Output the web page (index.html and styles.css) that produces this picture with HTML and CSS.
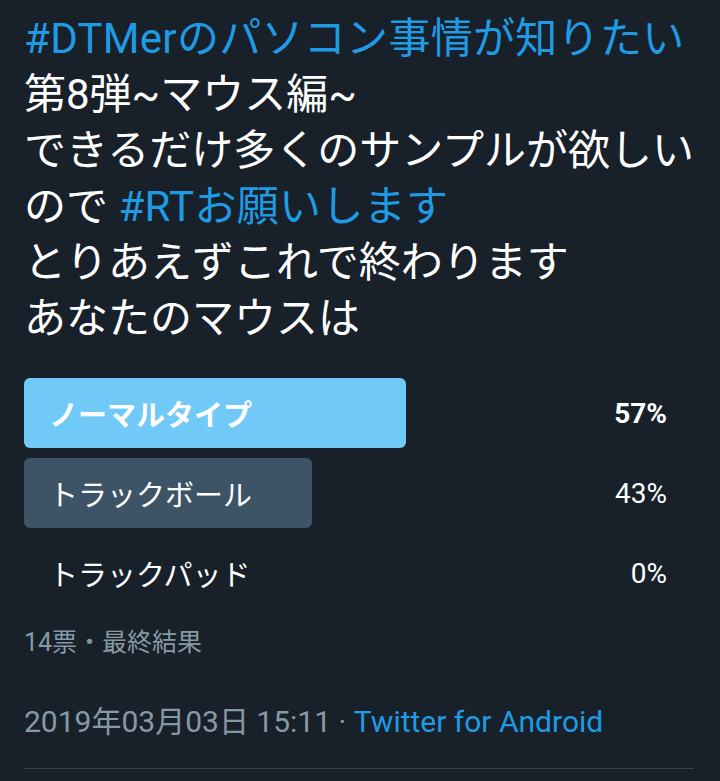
FILE: index.html
```html
<!DOCTYPE html>
<html lang="ja">
<head>
<meta charset="utf-8">
<title>ツイート</title>
<link rel="stylesheet" href="styles.css">
</head>
<body>
<main class="tweet">
  <p class="tweet-text"><a class="tag">#DTMerのパソコン事情が知りたい</a><br>第8弾~マウス編~<br>できるだけ多くのサンプルが欲しい<br>ので <a class="tag">#RTお願いします</a><br>とりあえずこれで終わります<br>あなたのマウスは</p>

  <section class="poll">
    <div class="choice is-winner">
      <div class="fill" style="width:57%"></div>
      <div class="choice-body"><span class="label">ノーマルタイプ</span><span class="pct">57%</span></div>
    </div>
    <div class="choice">
      <div class="fill" style="width:43%"></div>
      <div class="choice-body"><span class="label">トラックボール</span><span class="pct">43%</span></div>
    </div>
    <div class="choice">
      <div class="fill" style="width:0%"></div>
      <div class="choice-body"><span class="label">トラックパッド</span><span class="pct">0%</span></div>
    </div>
  </section>

  <p class="poll-meta">14票・最終結果</p>

  <p class="meta">2019年03月03日 15:11 · <a class="source">Twitter for Android</a></p>
  <hr class="divider">
</main>
</body>
</html>
```
FILE: styles.css
```css
html, body {
  margin: 0;
  padding: 0;
  background: #18202a;
}

body {
  font-family: "Roboto", "Noto Sans CJK JP", sans-serif;
  color: #ffffff;
}

.tweet {
  padding: 11px 26px 0 24px;
}

.tweet-text {
  margin: 0;
  font-size: 42px;
  line-height: 56px;
}

.tag {
  letter-spacing: 0.3px;
}

.tag,
.source {
  color: #1f9be3;
  text-decoration: none;
}

.poll {
  margin-top: 31px;
  display: flex;
  flex-direction: column;
  gap: 10px;
}

.choice {
  display: grid;
  height: 70px;
}

.fill,
.choice-body {
  grid-area: 1 / 1;
}

.fill {
  justify-self: start;
  height: 100%;
  border-radius: 6px;
  background: #3d5466;
}

.is-winner .fill {
  background: #71c9f8;
}

.choice-body {
  display: flex;
  align-items: center;
  justify-content: space-between;
  padding: 0 27px 0 25px;
  font-size: 28px;
}

.label {
  font-size: 29px;
}

.is-winner .choice-body {
  font-weight: 700;
}

.pct {
  font-family: "Roboto", sans-serif;
}

.poll-meta {
  margin: 19px 0 0;
  font-size: 25px;
  line-height: 32px;
  color: #8899a6;
}

.meta {
  margin: 45px 0 0;
  font-size: 30px;
  line-height: 36px;
  color: #8899a6;
}

.divider {
  margin: 28px 0 0;
  border: 0;
  height: 1px;
  background: #38444d;
}
```
